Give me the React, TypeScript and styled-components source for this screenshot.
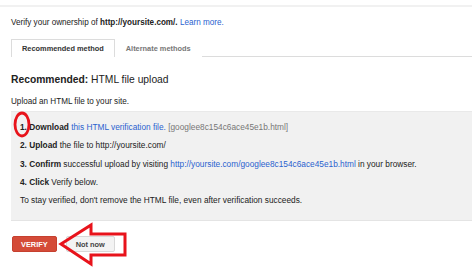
import styled, { createGlobalStyle } from 'styled-components';

const GlobalStyle = createGlobalStyle`
    html, body {
        margin: 0;
        padding: 0;
        background: #fff;
    }
    body {
        font-family: "Liberation Sans", Arial, sans-serif;
        color: #222;
    }
`;

const Page = styled.div`
    position: relative;
    width: 472px;
    height: 278px;
    overflow: hidden;
`;

const TopRule = styled.div`
    height: 5px;
    border-bottom: 2px solid #f1f1f1;
`;

const Content = styled.div`
    padding-left: 11px;
`;

const Intro = styled.div`
    margin-top: 10px;
    font-size: 8.15px;
    line-height: 12px;
    white-space: nowrap;
`;

const Link = styled.a`
    color: #2a62cf;
    text-decoration: none;
`;

const TabBar = styled.div`
    display: flex;
    margin-top: 10px;
    border-bottom: 1px solid #dcdcdc;
`;

const Tab = styled.div<{ $active?: boolean }>`
    height: 16px;
    padding: 0 10px 1px;
    display: flex;
    align-items: center;
    font-size: 7.4px;
    font-weight: bold;
    color: ${p => (p.$active ? '#333' : '#777')};
    background: #fff;
    border: 1px solid ${p => (p.$active ? '#dcdcdc' : 'transparent')};
    border-bottom: none;
    margin-bottom: -1px;
`;

const Heading = styled.h2`
    margin: 16px 0 0;
    font-size: 10.3px;
    line-height: 14px;
    font-weight: normal;
    color: #222;
`;

const SubText = styled.p`
    margin: 9px 0 0;
    font-size: 8.15px;
    line-height: 12px;
`;

const StepsBox = styled.div`
    margin-top: 3px;
    background: #f1f1f1;
    border-top: 1px solid #e9e9e9;
    border-bottom: 1px solid #e4e4e4;
    padding: 6px 0 11px 9px;
    font-size: 8.3px;
    white-space: nowrap;
`;

const Step = styled.div`
    line-height: 18.3px;
    height: 18.3px;
`;

const FileName = styled.span`
    color: #777;
`;

const Actions = styled.div`
    display: flex;
    gap: 9px;
    margin-top: 15px;
    padding-left: 1px;
`;

const Button = styled.button<{ $primary?: boolean }>`
    height: 16px;
    padding: 0 ${p => (p.$primary ? '8px' : '9px')};
    font-family: "Liberation Sans", Arial, sans-serif;
    font-size: 7.4px;
    font-weight: bold;
    border-radius: 2px;
    border: 1px solid ${p => (p.$primary ? '#c6402f' : '#d8d8d8')};
    background: ${p => (p.$primary ? '#d44b38' : '#f3f3f3')};
    color: ${p => (p.$primary ? '#fff' : '#444')};
`;

const Annotations = styled.svg`
    position: absolute;
    left: 0;
    top: 0;
    pointer-events: none;
`;

export default function App() {
    return (
        <Page>
            <GlobalStyle />
            <TopRule />
            <Content>
                <Intro>
                    Verify your ownership of <b>http://yoursite.com/.</b>{' '}
                    <Link href="#">Learn more.</Link>
                </Intro>

                <TabBar>
                    <Tab $active>Recommended method</Tab>
                    <Tab>Alternate methods</Tab>
                </TabBar>

                <Heading>
                    <b>Recommended:</b> HTML file upload
                </Heading>
                <SubText>Upload an HTML file to your site.</SubText>

                <StepsBox>
                    <Step>
                        <b>1. Download</b> <Link href="#">this HTML verification file.</Link>{' '}
                        <FileName>[googlee8c154c6ace45e1b.html]</FileName>
                    </Step>
                    <Step>
                        <b>2. Upload</b> the file to http://yoursite.com/
                    </Step>
                    <Step>
                        <b>3. Confirm</b> successful upload by visiting{' '}
                        <Link href="#">http://yoursite.com/googlee8c154c6ace45e1b.html</Link> in your
                        browser.
                    </Step>
                    <Step>
                        <b>4. Click</b> Verify below.
                    </Step>
                    <Step>To stay verified, don't remove the HTML file, even after verification succeeds.</Step>
                </StepsBox>

                <Actions>
                    <Button $primary>VERIFY</Button>
                    <Button>Not now</Button>
                </Actions>
            </Content>

            {/* red markup drawn over the screenshot */}
            <Annotations width="472" height="278" viewBox="0 0 472 278">
                <ellipse cx="22" cy="124.5" rx="7" ry="11.5" fill="none" stroke="#e8131b" strokeWidth="2.8" />
                <polygon
                    points="61,244 91,225 91,234 125,234 125,255 91,255 91,264"
                    fill="none"
                    stroke="#e8131b"
                    strokeWidth="3"
                    strokeLinejoin="miter"
                />
            </Annotations>
        </Page>
    );
}
